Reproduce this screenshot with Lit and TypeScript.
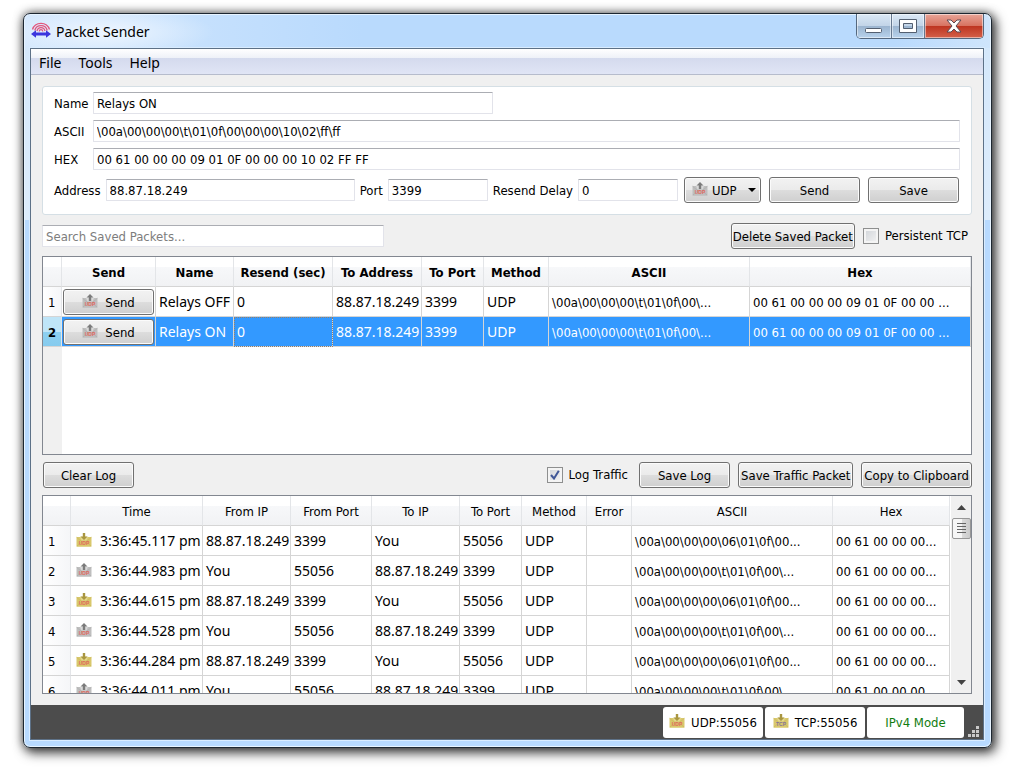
import { LitElement, html, css, svg, nothing } from "lit";
import { customElement, property } from "lit/decorators.js";
import { classMap } from "lit/directives/class-map.js";

type Direction = "in" | "out";

@customElement("packet-icon")
class PacketIcon extends LitElement {
  @property() direction: Direction = "out";
  @property() protocol = "UDP";

  static styles = css`
    :host { display: inline-flex; flex: none; }
    svg { width: 16px; height: 14px; display: block; overflow: visible; }
    .mark { font: bold 5px "Liberation Sans", sans-serif; }
    .udp { fill: #e0675e; }
    .tcp { fill: #857599; }
  `;

  render() {
    const incoming = this.direction === "in";
    const body = incoming ? "#d9c86c" : "#bfbfbf";
    const fold = incoming ? "#c9b85f" : "#adadad";
    const arrow = incoming ? "#a99640" : "#7b7b7b";
    return html`<svg viewBox="0 0 16 14" aria-hidden="true">
      <path d="M1 4h14a.5.5 0 0 1 .5.5v8.500a.7.7 0 0 1-.7.700H1.200a.7.7 0 0 1-.7-.700V4.500A.5.5 0 0 1 1 4z" fill=${body}></path>
      <path d="M.5 4.200L5 8h6l4.500-3.800M.8 13.200L5 9.500M15.200 13.200L11 9.500" fill="none" stroke=${fold} stroke-width=".7"></path>
      <path d="M4 3.800h8L10.500 7.500h-5z" fill=${incoming ? "#e4d88f" : "#dadada"}></path>
      ${incoming
        ? svg`<path d="M6.800 0h2.400v3.500h2.300L8 7 4.500 3.500h2.300z" fill=${arrow}></path>`
        : svg`<path d="M6.800 7h2.400V3.500h2.300L8 0 4.500 3.500h2.300z" fill=${arrow}></path>`}
      <text class="mark ${this.protocol.toLowerCase()}" x="8" y="11.500" text-anchor="middle">${this.protocol}</text>
    </svg>`;
  }
}

const controls = css`
  * { box-sizing: border-box; }
  button, select, input { font: inherit; color: inherit; margin: 0; }
  .btn {
    height: 26px;
    min-width: 91px;
    padding: 1px 1px 0;
    border: 1px solid #707070;
    border-radius: 3px;
    background: linear-gradient(#f2f2f2, #ebebeb 48%, #dddddd 50%, #cfcfcf);
    box-shadow: inset 0 0 0 1px #fbfbfb;
    color: #000;
    display: inline-flex;
    align-items: center;
    justify-content: center;
    white-space: nowrap;
  }
`;

interface Column { title: string; width?: number; small?: boolean; }

const savedColumns: Column[] = [
  { title: "Send", width: 94 },
  { title: "Name", width: 78 },
  { title: "Resend (sec)", width: 99 },
  { title: "To Address", width: 89 },
  { title: "To Port", width: 62 },
  { title: "Method", width: 65 },
  { title: "ASCII", width: 201, small: true },
  { title: "Hex", small: true },
];

const logColumns: Column[] = [
  { title: "Time", width: 132 },
  { title: "From IP", width: 88 },
  { title: "From Port", width: 81 },
  { title: "To IP", width: 88 },
  { title: "To Port", width: 62 },
  { title: "Method", width: 65 },
  { title: "Error", width: 45 },
  { title: "ASCII", width: 201, small: true },
  { title: "Hex", small: true },
];

const savedPackets = ["Relays OFF", "Relays ON"].map((name) => [
  name, "0", "88.87.18.249", "3399", "UDP",
  "\\00a\\00\\00\\00\\t\\01\\0f\\00\\...", "00 61 00 00 00 09 01 0F 00 00 ...",
]);

const logRow = (time: string, direction: Direction) => ({
  direction,
  cells: [
    time,
    ...(direction === "in" ? ["88.87.18.249", "3399", "You", "55056"] : ["You", "55056", "88.87.18.249", "3399"]),
    "UDP", "",
    direction === "in" ? "\\00a\\00\\00\\00\\06\\01\\0f\\00..." : "\\00a\\00\\00\\00\\t\\01\\0f\\00\\...",
    "00 61 00 00 00...",
  ],
});

const logRows = [
  logRow("3:36:45.117 pm", "in"),
  logRow("3:36:44.983 pm", "out"),
  logRow("3:36:44.615 pm", "in"),
  logRow("3:36:44.528 pm", "out"),
  logRow("3:36:44.284 pm", "in"),
  logRow("3:36:44.011 pm", "out"),
];

@customElement("packet-table")
class PacketTable extends LitElement {
  @property() kind: "saved" | "log" = "saved";

  static styles = [controls, css`
    :host {
      display: flex;
      overflow: hidden;
      border: 1px solid #828790;
      background: #fff;
    }
    .pane { flex: 1; min-width: 0; overflow: hidden; }
    .saved { background: linear-gradient(90deg, #f0f0f0 19px, #fff 19px); }
    .log { background: linear-gradient(90deg, #f0f0f0 28px, #fff 28px); }
    table { width: 100%; table-layout: fixed; border-collapse: separate; border-spacing: 0; }
    th, td { height: 30px; padding: 2px 0 0; overflow: hidden; white-space: nowrap; }
    thead th {
      font-weight: normal;
      text-align: center;
      border-right: 1px solid #e3e5e8;
      border-bottom: 1px solid #d5d5d5;
      background: linear-gradient(#fff 33%, #f7f8fa 33%, #f1f2f4);
    }
    .saved thead th { font-weight: bold; }
    tbody th {
      font-weight: normal;
      text-align: left;
      padding-left: 5px;
      border-right: 1px solid #e3e5e8;
      border-bottom: 1px solid #d5d5d5;
      background: linear-gradient(90deg, #fff, #f5f6f8);
    }
    td {
      font: 14px/20px "Noto Sans", "Open Sans", sans-serif;
      padding: 1px 3px 0;
      background: #fff;
      border-right: 1px solid #d5d5d5;
      border-bottom: 1px solid #d5d5d5;
    }
    td.small { font: 13px/16px "DejaVu Sans Condensed", "DejaVu Sans", sans-serif; padding-top: 2px; }
    .selected td { background: #3399ff; color: #fff; }
    .selected th { font-weight: bold; background: linear-gradient(#bfe5f8 50%, #8dd0f1 50%, #86cbee); }
    .selected td.focus { outline: 1px dotted #8f7f70; outline-offset: -1px; }
    td.action { font: inherit; padding: 0 1px; }
    .action .btn { width: 100%; gap: 7px; padding-top: 2px; }
    .action packet-icon { padding-bottom: 4px; }
    .time { display: flex; align-items: center; gap: 8px; padding-left: 2px; }
    .time packet-icon { padding-bottom: 2px; }
    .scroll {
      flex: none;
      width: 21px;
      padding: 0 1px;
      background: #f0f0f0;
      border-left: 1px solid #fff;
      display: flex;
      flex-direction: column;
      align-items: center;
    }
    .scroll button { border: 0; padding: 0; background: none; width: 19px; height: 22px; display: grid; place-items: center; }
    .scroll .thumb {
      height: 21px;
      border: 1px solid #979797;
      border-radius: 2px;
      background: linear-gradient(90deg, #f6f6f6 50%, #dcdcdc 50%, #cbcbcb);
    }
    .track { flex: 1; }
    svg { display: block; }
  `];

  private head(columns: Column[], first: number) {
    return html`
      <colgroup>
        <col style="width:${first}px" />
        ${columns.map((c) => html`<col style=${c.width ? `width:${c.width}px` : nothing} />`)}
      </colgroup>
      <thead><tr><th></th>${columns.map((c) => html`<th scope="col">${c.title}</th>`)}</tr></thead>`;
  }

  private renderSaved() {
    return html`<div class="pane saved"><table>
      ${this.head(savedColumns, 19)}
      <tbody>${savedPackets.map((row, r) => html`
        <tr class=${classMap({ selected: r === 1 })}>
          <th scope="row">${r + 1}</th>
          <td class="action"><button class="btn"><packet-icon></packet-icon>Send</button></td>
          ${row.map((cell, c) => html`<td class=${classMap({ small: !!savedColumns[c + 1].small, focus: r === 1 && c === 1 })}>${cell}</td>`)}
        </tr>`)}
      </tbody></table></div>`;
  }

  private renderLog() {
    return html`<div class="pane log"><table>
      ${this.head(logColumns, 28)}
      <tbody>${logRows.map((row, r) => html`
        <tr>
          <th scope="row">${r + 1}</th>
          ${row.cells.map((cell, c) => html`<td class=${classMap({ small: !!logColumns[c].small })}>${c === 0
            ? html`<div class="time"><packet-icon direction=${row.direction}></packet-icon>${cell}</div>`
            : cell}</td>`)}
        </tr>`)}
      </tbody></table></div>
      <div class="scroll">
        <button aria-label="Scroll up"><svg width="9" height="5"><path d="M0 5l4.500-5L9 5z" fill="#444"></path></svg></button>
        <button class="thumb" aria-label="Scroll position"><svg width="9" height="11"><path d="M0 .5h9M0 3.500h9M0 6.500h9M0 9.500h9" stroke="#666"></path></svg></button>
        <div class="track"></div>
        <button aria-label="Scroll down"><svg width="9" height="5"><path d="M0 0l4.500 5L9 0z" fill="#444"></path></svg></button>
      </div>`;
  }

  render() {
    return this.kind === "saved" ? this.renderSaved() : this.renderLog();
  }
}

@customElement("app-root")
class AppRoot extends LitElement {
  static styles = [controls, css`
    :host {
      display: flex;
      box-sizing: border-box;
      min-height: 100vh;
      padding: 13px 25px 24px 23px;
      background: #fff;
      color: #000;
      overflow: hidden;
      font: 13px/16px "DejaVu Sans Condensed", "DejaVu Sans", sans-serif;
    }
    .window {
      flex: 1;
      min-width: 0;
      display: flex;
      flex-direction: column;
      padding: 0 7px 7px 6px;
      border: 1px solid #1d2731;
      border-radius: 7px;
      background:
        radial-gradient(ellipse 110px 26px at 80px 18px, #eef6ff, #eef6ff00),
        linear-gradient(90deg, #d3e7fd, #b9dafd 35%, #b9dafd 90%, #cfe5fc) 0 0 / 100% 34px no-repeat,
        linear-gradient(#d3e7fb, #ddecfb 206px, #b8daff 206px);
      box-shadow: inset 0 0 0 1px #e8f4ff, 3px 4px 12px 1px #000000b0, 0 0 10px #00000080;
    }
    .titlebar { height: 34px; display: flex; align-items: flex-start; }
    .brand {
      flex: 1;
      display: flex;
      align-items: center;
      gap: 5px;
      height: 34px;
      padding-left: 1px;
      font: 14px/20px "Noto Sans", "Open Sans", sans-serif;
    }
    .brand h1 { margin: 0; font: inherit; padding-top: 2px; }
    .chrome {
      display: flex;
      height: 25px;
      border: 1px solid #55687e;
      border-top: 0;
      border-radius: 0 0 5px 5px;
      overflow: hidden;
    }
    .chrome button {
      border: 0;
      border-right: 1px solid #66788f;
      padding: 0;
      width: 35px;
      display: grid;
      place-items: center;
      background: linear-gradient(#dbe8f5, #c3d5e8 48%, #9bb4cf 50%, #b8d2ec);
      box-shadow: inset 0 0 0 1px #ffffff80;
    }
    .chrome .max { width: 33px; }
    .chrome .close {
      width: 58px;
      border-right: 0;
      background: linear-gradient(#e8a598, #d87462 48%, #bd3420 50%, #d4604a);
    }
    .client {
      flex: 1;
      display: flex;
      flex-direction: column;
      border: 1px solid #5d7187;
      background: #f0f0f0;
      box-shadow: 0 0 0 1px #d9ecff;
    }
    .menubar {
      height: 26px;
      display: flex;
      gap: 17px;
      padding: 0 8px;
      border-bottom: 1px solid #b6bccc;
      background: linear-gradient(#fff, #eef1f8 9px, #d4daed 9px, #e0e5f5);
    }
    .menubar button { border: 0; padding: 2px 0 0; background: none; font: 14px/20px "Noto Sans", "Open Sans", sans-serif; }
    .main { flex: 1; display: flex; flex-direction: column; padding: 11px; }
    .editor {
      display: flex;
      flex-direction: column;
      gap: 6px;
      padding: 5px 11px 11px;
      border: 1px solid #d5dfe5;
      border-radius: 3px;
      background: #fff;
    }
    .field { display: flex; align-items: center; }
    .field label { width: 39px; padding-top: 1px; }
    .text {
      height: 22px;
      min-width: 0;
      padding: 1px 3px 0;
      border: 1px solid #e2e3ea;
      border-top-color: #abadb3;
      border-radius: 1px;
      background: #fff;
      outline: 0;
    }
    .grow { flex: 1; }
    .name { width: 400px; }
    .line { display: flex; align-items: center; gap: 5px; padding-top: 1px; }
    .line label { padding-top: 1px; }
    .number { width: 100px; }
    .actions { display: flex; gap: 8px; padding: 0 1px; }
    .picker { display: grid; align-items: center; width: 77px; }
    .picker > * { grid-area: 1 / 1; }
    .picker select { appearance: none; width: 100%; min-width: 0; padding: 1px 0 0 27px; }
    .picker packet-icon { padding: 0 0 2px 8px; pointer-events: none; }
    .picker .arrow { justify-self: end; margin-right: 5px; pointer-events: none; }
    .bar { display: flex; align-items: center; justify-content: space-between; padding: 8px 0 7px; }
    .search { width: 342px; }
    .search::placeholder { color: #7d7d7d; opacity: 1; }
    .group { display: flex; align-items: center; gap: 8px; }
    .check { display: flex; align-items: center; gap: 6px; }
    .box { display: grid; place-items: center; }
    .box > * { grid-area: 1 / 1; }
    .box input {
      appearance: none;
      width: 16px;
      height: 16px;
      border: 1px solid #8e8f8f;
      background: linear-gradient(135deg, #cfd3d8, #f4f4f4);
      box-shadow: inset 0 0 0 2px #f4f4f4;
    }
    .box svg { pointer-events: none; }
    .persistent { padding-right: 4px; }
    .traffic { padding-right: 3px; }
    packet-table { flex: 1 1 0; min-height: 198px; }
    .logbar { padding: 7px 0; padding-left: 1px; }
    .logbar .btn { padding: 1px 2px 0; }
    .status {
      height: 34px;
      display: flex;
      align-items: flex-start;
      justify-content: flex-end;
      gap: 2px;
      padding: 2px 3px 0 0;
      background: #4c4c4c;
    }
    .status button {
      height: 31px;
      width: 100px;
      border: 0;
      border-radius: 3px;
      background: #fff;
      padding: 0;
      display: flex;
      align-items: center;
      justify-content: center;
      gap: 6px;
    }
    .status packet-icon { padding-bottom: 4px; }
    .status .mode { width: 97px; color: #107c10; }
    .grip { align-self: flex-end; margin-left: 2px; padding-bottom: 2px; }
    svg { display: block; }
  `];

  render() {
    return html`
      <div class="window">
        <header class="titlebar">
          <div class="brand">
            <svg width="20" height="18" viewBox="0 0 20 18" aria-hidden="true">
              <g fill="none" stroke="#e2557c" stroke-width="1.300">
                <path d="M1.500 7.500C4 -.8 16 -.8 18.500 7.500"></path>
                <path d="M3.700 8.500C5.500 2 14.500 2 16.300 8.500"></path>
                <path d="M6 9C7 4.500 13 4.500 14 9"></path>
                <path d="M8.200 9.500C8.500 7 11.500 7 11.800 9.500"></path>
              </g>
              <path d="M0 12l5-3.800v2.400h10V8.200L20 12l-5 3.800v-2.400H5v2.400z" fill="#3c35dd"></path>
            </svg>
            <h1>Packet Sender</h1>
          </div>
          <div class="chrome">
            <button aria-label="Minimize"><svg width="18" height="18"><rect x=".5" y="11.500" width="16" height="4" rx="1" fill="#fff" stroke="#535f70"></rect></svg></button>
            <button class="max" aria-label="Maximize"><svg width="18" height="14"><path fill-rule="evenodd" d="M.5.5h17v13H.5zM4.500 4.500v5h9v-5z" fill="#fff" stroke="#535f70"></path></svg></button>
            <button class="close" aria-label="Close"><svg width="16" height="14" viewBox="0 0 16 14"><path d="M1 1h4l3 3 3-3h4l-5 6 5 6h-4l-3-3-3 3H1l5-6z" fill="#fff" stroke="#5b4a55"></path></svg></button>
          </div>
        </header>
        <div class="client">
          <nav class="menubar"><button>File</button><button>Tools</button><button>Help</button></nav>
          <main class="main">
            <form class="editor" @submit=${(e: Event) => e.preventDefault()}>
              <div class="field"><label for="name">Name</label><input id="name" class="text name" value="Relays ON" /></div>
              <div class="field"><label for="ascii">ASCII</label><input id="ascii" class="text grow" value="\\00a\\00\\00\\00\\t\\01\\0f\\00\\00\\00\\10\\02\\ff\\ff" /></div>
              <div class="field"><label for="hex">HEX</label><input id="hex" class="text grow" value="00 61 00 00 00 09 01 0F 00 00 00 10 02 FF FF" /></div>
              <div class="line">
                <label for="address">Address</label><input id="address" class="text grow" value="88.87.18.249" />
                <label for="port">Port</label><input id="port" class="text number" value="3399" />
                <label for="delay">Resend Delay</label><input id="delay" class="text number" value="0" />
                <div class="actions">
                  <div class="picker">
                    <select class="btn" aria-label="Protocol"><option>UDP</option><option>TCP</option></select>
                    <packet-icon></packet-icon>
                    <svg class="arrow" width="8" height="4"><path d="M0 0h8L4 4z"></path></svg>
                  </div>
                  <button class="btn">Send</button>
                  <button class="btn" type="button">Save</button>
                </div>
              </div>
            </form>
            <div class="bar">
              <input class="text search" aria-label="Search Saved Packets" placeholder="Search Saved Packets..." />
              <div class="group">
                <button class="btn">Delete Saved Packet</button>
                <label class="check persistent"><span class="box"><input type="checkbox" /></span>Persistent TCP</label>
              </div>
            </div>
            <packet-table kind="saved"></packet-table>
            <div class="bar logbar">
              <button class="btn">Clear Log</button>
              <div class="group">
                <label class="check traffic"><span class="box"><input type="checkbox" checked /><svg width="10" height="10" viewBox="0 0 10 10"><path d="M1 5l3 3.500L8.800.8" fill="none" stroke="#3f5797" stroke-width="2"></path></svg></span>Log Traffic</label>
                <button class="btn">Save Log</button>
                <button class="btn">Save Traffic Packet</button>
                <button class="btn">Copy to Clipboard</button>
              </div>
            </div>
            <packet-table kind="log"></packet-table>
          </main>
          <footer class="status">
            <button><packet-icon direction="in"></packet-icon>UDP:55056</button>
            <button><packet-icon direction="in" protocol="TCP"></packet-icon>TCP:55056</button>
            <button class="mode">IPv4 Mode</button>
            <svg class="grip" width="12" height="13" aria-hidden="true"><path d="M8 0h3v3H8zM8 4h3v3H8zM4 4h3v3H4zM8 8h3v3H8zM4 8h3v3H4zM0 8h3v3H0z" fill="#c9c9c9"></path></svg>
          </footer>
        </div>
      </div>`;
  }
}
